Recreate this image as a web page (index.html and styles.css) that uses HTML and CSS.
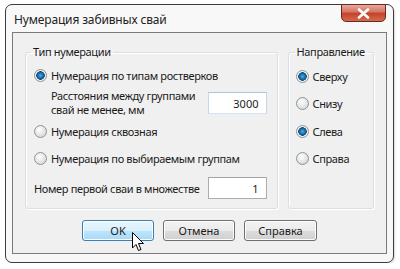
FILE: index.html
```html
<!DOCTYPE html>
<html lang="ru">
<head>
<meta charset="UTF-8">
<title>Нумерация забивных свай</title>
<link rel="stylesheet" href="styles.css">
</head>
<body>
	<div class="window">
		<div class="titlebar">
			<span class="title">Нумерация забивных свай</span>
			<a href="#none" class="close">
				<svg width="13" height="11" viewBox="0 0 13 11"><path d="M2 1.5 L11 9.5 M11 1.5 L2 9.5" stroke="#fff" stroke-width="2.6" stroke-linecap="round"/></svg>
			</a>
		</div>
		<div class="client">
			<div class="groups">
				<fieldset class="group type">
					<legend>Тип нумерации</legend>
					<label class="opt first"><span class="radio on"></span>Нумерация по типам ростверков</label>
					<div class="field dist">
						<span class="flabel">Расстояния между группами<br>свай не менее, мм</span>
						<input class="num" type="text" value="3000">
					</div>
					<label class="opt r2"><span class="radio"></span>Нумерация сквозная</label>
					<label class="opt r3"><span class="radio"></span>Нумерация по выбираемым группам</label>
					<div class="field first-num">
						<span class="flabel">Номер первой сваи в множестве</span>
						<input class="num" type="text" value="1">
					</div>
				</fieldset>
				<fieldset class="group dir">
					<legend>Направление</legend>
					<label class="opt"><span class="radio on"></span>Сверху</label>
					<label class="opt"><span class="radio"></span>Снизу</label>
					<label class="opt low"><span class="radio on"></span>Слева</label>
					<label class="opt"><span class="radio"></span>Справа</label>
				</fieldset>
			</div>
			<div class="buttons">
				<button class="btn hot">OK</button>
				<button class="btn">Отмена</button>
				<button class="btn wide">Справка</button>
			</div>
		</div>
		<!-- курсор над кнопкой OK -->
		<svg class="cursor" width="13" height="20" viewBox="0 0 13 20"><path d="M0.5 0.5 L0.5 16 L4 12.5 L6.5 18.5 L9 17.5 L6.5 11.5 L11.5 11.5 Z" fill="#fff" stroke="#000" stroke-width="1" stroke-linejoin="round"/></svg>
	</div>
</body>
</html>
```

FILE: styles.css
```css
*{margin: 0; padding: 0; box-sizing: border-box;}
body{background: #fff; font-family: "Noto Sans", "Liberation Sans", sans-serif; font-size: 11px; letter-spacing: -0.35px; color: #1b1b1b;}
a{text-decoration: none; display: block;}

.window{
	position: relative;
	width: 389px;
	height: 259px;
	margin: 4px 0 0 5px;
	border: 1px solid #3c3c3c;
	border-radius: 7px;
	background: #f8f8f8;
	padding: 0 6px;
	box-shadow: 1px 1px 2px rgba(0,0,0,.15);
}
.titlebar{height: 27px; display: flex; align-items: center; padding-left: 2px;}
.title{font-size: 12px; letter-spacing: -0.15px; color: #222; padding-top: 1px;}
.close{
	position: absolute; top: -1px; right: 7px;
	width: 45px; height: 18px;
	border: 1px solid #6b2a22;
	border-radius: 0 0 5px 5px;
	background: linear-gradient(#e9a99c, #d3735f 45%, #c2412a 50%, #d46a4c);
	display: flex; align-items: center; justify-content: center;
}

.client{
	height: 222px;
	border: 1px solid #7a7a7a;
	background: #f0f0f0;
	padding: 12px 12px 0;
}
.groups{display: flex; gap: 10px;}
.group{
	border: 1px solid #d5dfe5;
	border-radius: 3px;
	box-shadow: inset 1px 1px 0 #fff, 1px 1px 0 #fff;
	height: 164px;
}
.group legend{padding: 0 2px; line-height: 14px; color: #1b1b1b;}
.type{width: 254px; padding: 0 10px 0 8px;}
.type legend{margin-left: -3px;}
.dir{width: 87px; padding: 8px 0 0 7px; display: flex; flex-direction: column; gap: 9px;}
.dir legend{margin-left: -1px;}
.dir .low{margin-top: 1px;}

.opt{display: flex; align-items: center; height: 18px; gap: 4px; white-space: nowrap;}
.type .first{margin-top: 7px;}
.type .r2{margin-top: 5px;}
.type .r3{margin-top: 9px;}
.radio{
	flex: none;
	width: 13px; height: 13px; border-radius: 50%;
	border: 1px solid #8f9496;
	background: radial-gradient(circle at 40% 35%, #ffffff, #dcdcdc 70%, #c8c8c8);
}
.radio.on{
	background: radial-gradient(circle, #4ab0ea 0, #1f6fa8 2.5px, #0d4c7c 4px, #fff 4.6px, #e4e4e4 6px);
}

.field{display: flex; align-items: center; justify-content: space-between;}
.flabel{white-space: nowrap;}
.dist{height: 28px; margin-top: 5px; padding-left: 17px; line-height: 14px;}
.first-num{height: 22px; margin-top: 10px;}
.num{
	flex: none;
	width: 59px; height: 22px;
	border: 1px solid #abadb3;
	border-top-color: #a2a4aa;
	background: #fff;
	text-align: right;
	padding-right: 7px;
	font: inherit; color: #1b1b1b;
}
.dist .num{border-color: #a8c6dd #c3d8ea #d4e3ef;}

.buttons{display: flex; justify-content: center; gap: 9px; margin-top: 11px;}
.btn{
	width: 72px; height: 21px;
	border: 1px solid #707070;
	border-radius: 3px;
	background: linear-gradient(#f2f2f2, #ebebeb 50%, #dddddd 50%, #cfcfcf);
	box-shadow: inset 0 0 0 1px #fcfcfc;
	font: inherit; color: #1b1b1b;
}
.btn.wide{width: 73px;}
.btn.hot{
	border-color: #3c7fb1;
	background: linear-gradient(#eaf6fd, #d9f0fc 50%, #bee6fd 50%, #a7d9f5);
}
.cursor{position: absolute; left: 126px; top: 227px;}
```
